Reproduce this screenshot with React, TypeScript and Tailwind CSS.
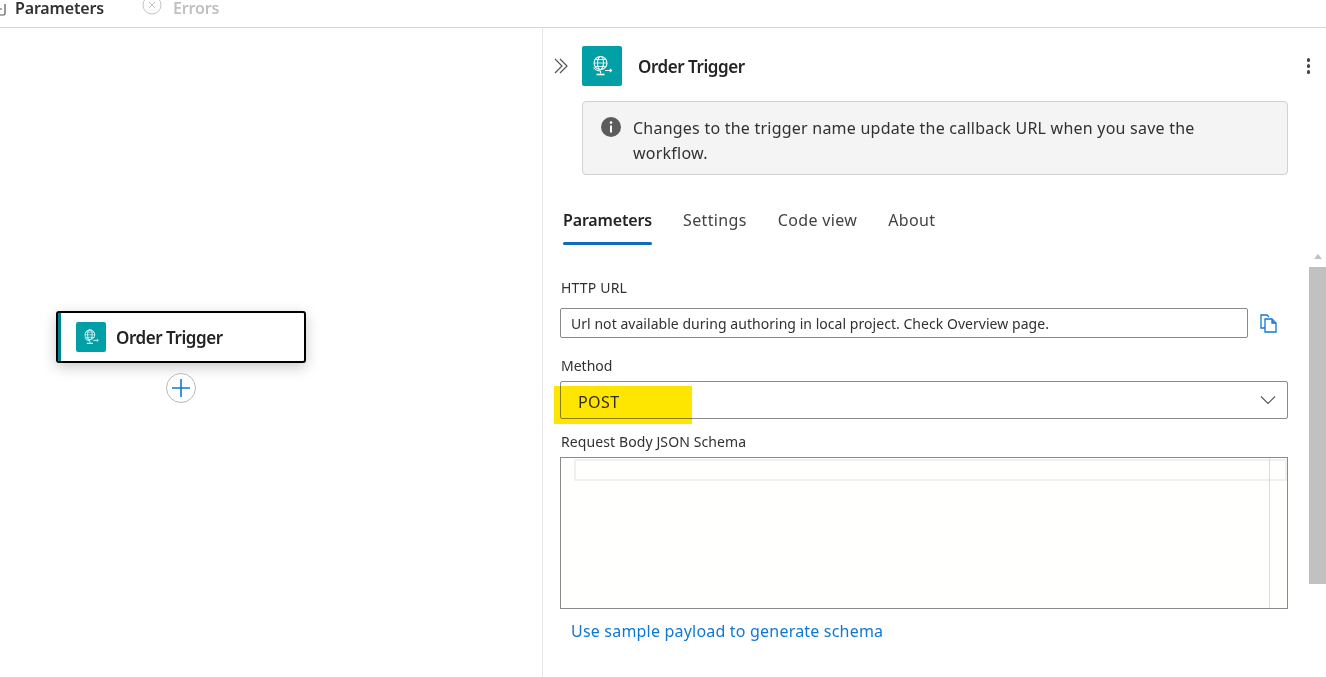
import React from "react";

const font = { fontFamily: '"Noto Sans", sans-serif' };

function TriggerGlyph({ size }: { size: number }) {
  return (
    <svg width={size} height={size} viewBox="0 0 24 24" fill="none" stroke="white" strokeWidth="1.1">
      <circle cx="10.5" cy="9" r="6.5" />
      <ellipse cx="10.5" cy="9" rx="3" ry="6.5" />
      <path d="M4 9h13M5 5.5h11M5 12.5h11" strokeWidth="0.8" />
      <path d="M3.5 13.5a9 9 0 0 0 7 3.5v2.5" />
      <path d="M6.5 20.5h8" strokeWidth="1.6" />
      <path d="M15 16.5h6.5M19.8 14.8l1.8 1.7-1.8 1.7" />
    </svg>
  );
}

function Tab({ label, active }: { label: string; active?: boolean }) {
  return (
    <div className="relative h-[50px] flex items-center">
      <span className={active ? "text-[16px] font-semibold text-[#242424] tracking-[-0.15px]" : "text-[16px] text-[#424242] tracking-[0.35px]"}>{label}</span>
      {active && <div className="absolute left-0 right-0 bottom-0 h-[3px] rounded-sm bg-[#0f6cbd]" />}
    </div>
  );
}

export default function App() {
  return (
    <div className="w-[1326px] h-[677px] overflow-hidden bg-white flex flex-col text-[#242424]" style={font}>
      {/* top tabs */}
      <div className="h-[28px] shrink-0 border-b border-[#d6d6d6] flex items-start">
        <div className="flex items-center h-[16px] gap-[9px]">
          <svg width="6" height="16" viewBox="0 0 6 16" fill="none" stroke="#555" strokeWidth="1.2">
            <path d="M0 15h3.5a1.5 1.5 0 0 0 1.5-1.5V4" />
            <path d="M0 9h2" />
          </svg>
          <span className="text-[16px] font-semibold text-[#323130] tracking-[-0.15px]">Parameters</span>
        </div>
        <div className="flex items-center h-[16px] ml-[38px] gap-[11px]">
          <svg width="20" height="20" viewBox="0 0 20 20" fill="none" stroke="#c4c4c4" strokeWidth="1" className="-mt-[3px]">
            <circle cx="10" cy="8" r="9" />
            <path d="M7 5l6 6M13 5l-6 6" />
          </svg>
          <span className="text-[16px] font-semibold text-[#c0c0c0] tracking-[-0.2px]">Errors</span>
        </div>
      </div>

      <div className="flex-1 flex min-h-0">
        {/* canvas */}
        <div className="relative w-[543px] shrink-0 border-r border-[#e8e8e8]">
          <div className="absolute left-[56px] top-[283px] w-[250px] h-[52px] rounded-[3px] border-2 border-black bg-white shadow-[0_4px_14px_rgba(0,0,0,0.22)] flex items-center overflow-hidden">
            <div className="w-[3px] h-full bg-[#00838f] shrink-0" />
            <div className="ml-[15px] w-[30px] h-[30px] rounded-[2px] bg-[#00a0a6] flex items-center justify-center">
              <TriggerGlyph size={18} />
            </div>
            <span className="ml-[10px] mt-[1px] text-[17px] font-semibold text-[#242424] tracking-[-0.45px]">Order Trigger</span>
          </div>
          <div className="absolute left-[166px] top-[345px] w-[30px] h-[30px] rounded-full border border-[#b8b8b8] bg-white flex items-center justify-center">
            <svg width="20" height="20" viewBox="0 0 20 20" stroke="#0f78d4" strokeWidth="1.6">
              <path d="M10 1v18M1 10h18" />
            </svg>
          </div>
        </div>

        {/* panel */}
        <div className="relative flex-1 min-w-0">
          <div className="pt-[18px] pl-[11px] pr-[16px] flex items-center">
            <svg width="14" height="16" viewBox="0 0 14 16" fill="none" stroke="#555" strokeWidth="1.2">
              <path d="M1 1l7 7-7 7M6 1l7 7-7 7" />
            </svg>
            <div className="ml-[14px] w-[40px] h-[40px] rounded-[2px] bg-[#00a0a6] flex items-center justify-center">
              <TriggerGlyph size={24} />
            </div>
            <span className="ml-[16px] mt-[1px] text-[17px] font-semibold text-[#242424] tracking-[-0.45px]">Order Trigger</span>
            <div className="ml-auto flex flex-col gap-[2.5px]">
              <div className="w-[3.5px] h-[3.5px] rounded-full bg-[#424242]" />
              <div className="w-[3.5px] h-[3.5px] rounded-full bg-[#424242]" />
              <div className="w-[3.5px] h-[3.5px] rounded-full bg-[#424242]" />
            </div>
          </div>

          <div className="ml-[39px] mt-[15px] w-[706px] h-[74px] rounded-[4px] border border-[#d1d1d1] bg-[#f4f4f4] flex pl-[18px] pt-[14px]">
            <div className="w-[20px] h-[20px] mt-[1px] rounded-full bg-[#5c5c5c] text-white flex items-center justify-center shrink-0">
              <svg width="4" height="12" viewBox="0 0 4 12" fill="white">
                <circle cx="2" cy="1.6" r="1.3" />
                <rect x="1" y="4.5" width="2" height="7" />
              </svg>
            </div>
            <p className="ml-[12px] w-[600px] text-[16px] leading-[25px] text-[#323130] tracking-[0.23px]">
              Changes to the trigger name update the callback URL when you save the workflow.
            </p>
          </div>

          <div className="ml-[20px] mt-[20px] flex gap-[31px]">
            <Tab label="Parameters" active />
            <Tab label="Settings" />
            <Tab label="Code view" />
            <Tab label="About" />
          </div>

          <div className="ml-[17px] mt-[33px] w-[728px]">
            <div className="ml-px text-[14px] leading-[20px] text-[#323130] tracking-[0.18px]">HTTP URL</div>
            <div className="mt-[10px] flex items-center">
              <div className="w-[688px] h-[30px] rounded-[2px] border border-[#8a8a8a] flex items-center pl-[10px] text-[14px] text-[#323130] tracking-[0.04px]">
                Url not available during authoring in local project. Check Overview page.
              </div>
              <svg className="ml-[11px]" width="20" height="20" viewBox="0 0 20 20" fill="none" stroke="#0f78d4" strokeWidth="1.3">
                <path d="M6 15H2V2h6l2 2" />
                <path d="M6 6h7l4 4v9H6z" />
                <path d="M13 6v4h4" fill="#6a8fd8" />
              </svg>
            </div>
            <div className="ml-px mt-[18px] text-[14px] leading-[20px] text-[#323130]">Method</div>
            <div className="relative mt-[5px] h-[38px] rounded-[2px] border border-[#8a8a8a] flex items-center justify-between pl-[17px] pr-[11px]">
              <span className="pt-[3px] text-[16px] text-[#323130] tracking-[0.4px]">POST</span>
              <svg width="16" height="10" viewBox="0 0 16 10" fill="none" stroke="#555" strokeWidth="1.1">
                <path d="M1 1.5l7 7 7-7" />
              </svg>
              <div className="absolute left-[-7px] top-[4px] w-[138px] h-[38px] bg-[#ffe600] mix-blend-multiply" />
            </div>
            <div className="ml-px mt-[13px] text-[14px] leading-[20px] text-[#323130] tracking-[0.1px]">Request Body JSON Schema</div>
            <div className="relative mt-[5px] h-[152px] border border-[#8a8a8a] bg-[#fffffd]">
              <div className="ml-[13px] mt-[1px] h-[22px] border-2 border-[#f0f0ee]" />
              <div className="absolute top-0 bottom-0 right-[17px] w-px bg-[#dcdcdc]" />
            </div>
            <a className="block mt-[11px] ml-[11px] text-[16px] leading-[22px] text-[#0f78d4] tracking-[0.2px]">Use sample payload to generate schema</a>
          </div>

          {/* scrollbar */}
          <div className="absolute right-[4px] top-[226px] w-0 h-0 border-x-[4px] border-x-transparent border-b-[5px] border-b-[#c0c0c0]" />
          <div className="absolute right-0 top-[239px] w-[17px] h-[317px] bg-[#c1c1c1]" />
        </div>
      </div>
    </div>
  );
}
